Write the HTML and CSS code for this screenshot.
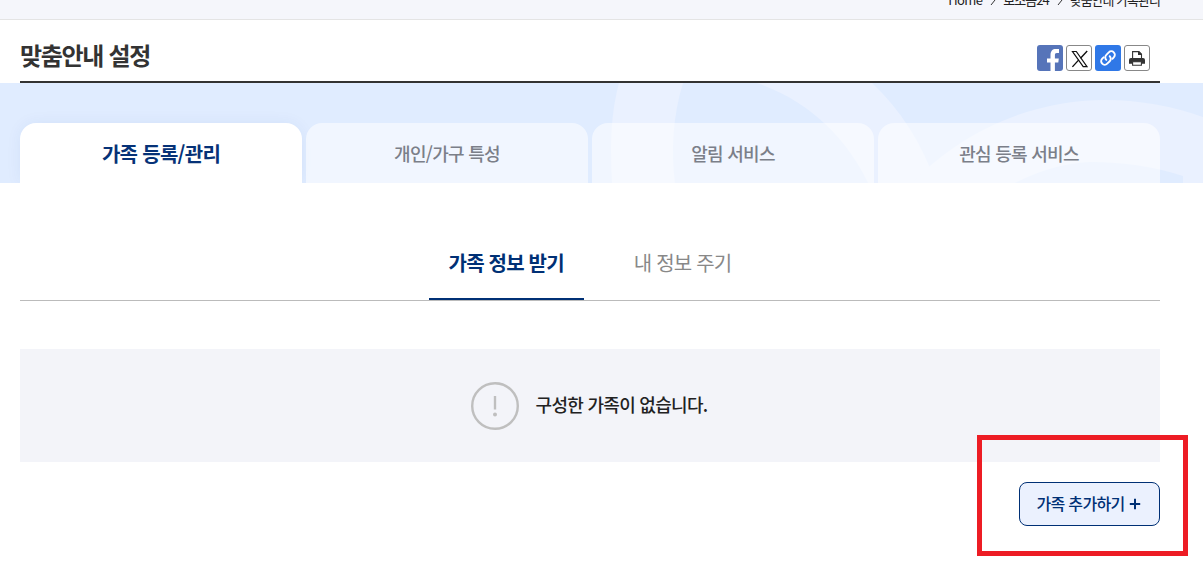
FILE: index.html
```html
<!DOCTYPE html>
<html lang="ko">
<head>
  <meta charset="UTF-8">
  <title>맞춤안내 설정</title>
  <meta name="viewport" content="width=device-width, initial-scale=1.0">
  <link rel="stylesheet" href="styles.css">
</head>
<body>

<nav class="breadcrumb">
  <div class="inner">
    <a class="home">Home</a>
    <svg class="arrow" viewBox="0 0 6 10"><path d="M1 0l4 5-4 5"/></svg>
    <a>보조금24</a>
    <svg class="arrow" viewBox="0 0 6 10"><path d="M1 0l4 5-4 5"/></svg>
    <a class="current">맞춤안내 가족관리</a>
  </div>
</nav>

<header class="title-area inner">
  <h1>맞춤안내 설정</h1>
  <div class="share">
    <button class="facebook" aria-label="페이스북">
      <svg viewBox="0 0 26 26"><path fill="#fff" d="M13.500 26v-8.500h-3.500v-4h3.500V10.500c0-4.500 2-6.400 5.300-6.400h3.200v4h-2.100c-1.500 0-2 .8-2 2.400v3h3.900l-.5 4h-3.400V26z"/></svg>
    </button>
    <button aria-label="X">
      <svg viewBox="0 0 26 26"><path fill="none" stroke="#111" stroke-width="1.200" d="M6.500 6.500h3.800l10.700 15.100h-3.800z"/><path stroke="#111" stroke-width="1.400" d="M21.200 6l-6.700 7.200M12.800 14.900L6.400 21.900"/></svg>
    </button>
    <button class="link" aria-label="링크 복사">
      <svg viewBox="0 0 26 26"><g fill="none" stroke="#fff" stroke-width="1.900" stroke-linecap="round" stroke-linejoin="round"><path d="M11.300 14.900a3.500 3.500 0 0 1 0-5l2.500-2.600a3.500 3.500 0 0 1 5 5l-1.400 1.500"/><path d="M14.700 11.200a3.500 3.500 0 0 1 0 5l-2.500 2.500a3.500 3.500 0 0 1-5-5l1.400-1.400"/></g></svg>
    </button>
    <button aria-label="인쇄">
      <svg viewBox="0 0 26 26"><path fill="#fff" stroke="#333" stroke-width="1.100" d="M8.600 13V6.600h6.200l2.700 2.700V13"/><path fill="#333" d="M14 6.500h1.500l2.500 2.700v.8h-4zM7 13h12a2 2 0 0 1 2 2v3.700H5V15a2 2 0 0 1 2-2z"/><path fill="#fff" stroke="#333" stroke-width="1.100" d="M8.600 16.700h8.800v3.500H8.600z"/></svg>
    </button>
  </div>
</header>

<section class="tab-area">
  <svg class="pattern" viewBox="0 0 1203 100" preserveAspectRatio="none">
    <path d="M619 0C613 22 611 45 611 68Q611 85 612 100H675C671 67 673 32 683 0z"/>
    <path d="M757 0C812 19 848 58 868 100H936C922 61 901 27 872 0z"/>
    <path d="M912 100C962 48 1032 17 1105 17Q1155 17 1203 34V100H1183V93Q1140 79 1090 79Q1052 81 1015 100z"/>
  </svg>
  <ul class="tabs inner">
    <li class="on">가족 등록/관리</li>
    <li>개인/가구 특성</li>
    <li>알림 서비스</li>
    <li>관심 등록 서비스</li>
  </ul>
</section>

<main class="inner">
  <div class="sub-tabs">
    <a class="on">가족 정보 받기</a>
    <a>내 정보 주기</a>
  </div>

  <div class="no-data">
    <svg viewBox="0 0 48 48"><circle cx="24" cy="24" r="22.800"/><path d="M24 14v13.500"/><circle class="dot" cx="24" cy="32.500" r="2"/></svg>
    <p>구성한 가족이 없습니다.</p>
  </div>

  <div class="btn-area">
    <button class="btn-add">가족 추가하기
      <svg viewBox="0 0 12 12"><path d="M6 .8v10.400M.8 6h10.400"/></svg>
    </button>
    <span class="highlight"></span>
  </div>
</main>

</body>
</html>
```
FILE: styles.css
```css
* { box-sizing: border-box; margin: 0; padding: 0; }
body {
  min-height: 100vh;
  font-family: "Noto Sans CJK KR", "Noto Sans", sans-serif;
  letter-spacing: -0.7px;
  color: #222;
  background: #fff;
}
button { font: inherit; letter-spacing: inherit; }
.inner { width: 1140px; margin-left: 20px; }

/* 상단 경로 */
.breadcrumb {
  height: 20px;
  background: #f5f6fb;
  border-bottom: 1px solid #e4e4e4;
  overflow: hidden;
}
.breadcrumb .inner {
  display: flex;
  justify-content: flex-end;
  align-items: center;
  height: 20px;
  margin-top: -11px;
  font-size: 13px;
  letter-spacing: -1px;
}
.breadcrumb .home { letter-spacing: -0.6px; }
.arrow { width: 6px; height: 10px; margin: 1px 7px 0 8px; fill: none; stroke: #333; }

/* 제목 */
.title-area {
  display: flex;
  justify-content: space-between;
  height: 63px;
  padding: 17px 10px 0 0;
  border-bottom: 2px solid #333;
}
h1 { font-size: 24px; line-height: 36px; letter-spacing: -1.3px; color: #333; }
.share { display: flex; gap: 3px; padding-top: 8px; }
.share button {
  width: 26px;
  height: 26px;
  border: 1px solid #888;
  border-radius: 3px;
  background: #fff;
  overflow: hidden;
}
.share svg { display: block; width: 26px; height: 26px; margin: -1px; }
.share .facebook { border: 0; background: #5674b9; }
.share .link { border: 0; background: #2f78e7; }
.share .facebook svg, .share .link svg { margin: 0; }

/* 탭 */
.tab-area {
  position: relative;
  height: 100px;
  padding-top: 40px;
  background: #e0ecff;
  overflow: hidden;
}
.pattern { position: absolute; left: 0; top: 0; width: 1203px; height: 100px; fill: #eaf1ff; }
.tabs { position: relative; display: flex; gap: 4px; list-style: none; }
.tabs li {
  flex: 1;
  height: 60px;
  border-radius: 16px 16px 0 0;
  background: rgba(255, 255, 255, 0.55);
  font-size: 18px;
  font-weight: 500;
  line-height: 61px;
  text-align: center;
  color: #7b7f89;
}
.tabs .on {
  background: #fff;
  box-shadow: 0 0 16px rgba(0, 60, 160, 0.06);
  font-size: 20px;
  font-weight: 700;
  line-height: 62px;
  color: #063277;
}

.sub-tabs {
  display: flex;
  justify-content: center;
  gap: 30px;
  height: 118px;
  padding-top: 43px;
  border-bottom: 1px solid #bbb;
}
.sub-tabs a { height: 74px; padding: 0 20px; font-size: 20px; line-height: 74px; letter-spacing: -0.8px; color: #888; }
.sub-tabs .on { border-bottom: 2px solid #003075; font-weight: 700; color: #003075; }

.no-data {
  display: flex;
  justify-content: center;
  align-items: center;
  gap: 17px;
  height: 113px;
  margin-top: 48px;
  padding-right: 2px;
  background: #f3f4f9;
  font-size: 18px;
  font-weight: 500;
}
.no-data p { padding-bottom: 3px; }
.no-data svg { width: 48px; height: 48px; fill: none; stroke: #bfbfbf; stroke-width: 2.4; }
.no-data .dot { fill: #bfbfbf; stroke: none; }

.btn-area { position: relative; display: flex; justify-content: flex-end; padding-top: 20px; }
.btn-add {
  display: flex;
  justify-content: center;
  align-items: center;
  gap: 5px;
  width: 141px;
  height: 44px;
  padding: 0 1px 2px 0;
  border: 1px solid #003075;
  border-radius: 8px;
  background: #ebf1fe;
  font-size: 16px;
  font-weight: 500;
  color: #003075;
}
.btn-add svg { width: 12px; height: 12px; margin-top: 1px; fill: none; stroke: #003075; stroke-width: 2; }
.highlight {
  position: absolute;
  right: -28px;
  top: -27px;
  width: 211px;
  height: 121px;
  border: 5px solid #ed1c24;
  pointer-events: none;
}
```
